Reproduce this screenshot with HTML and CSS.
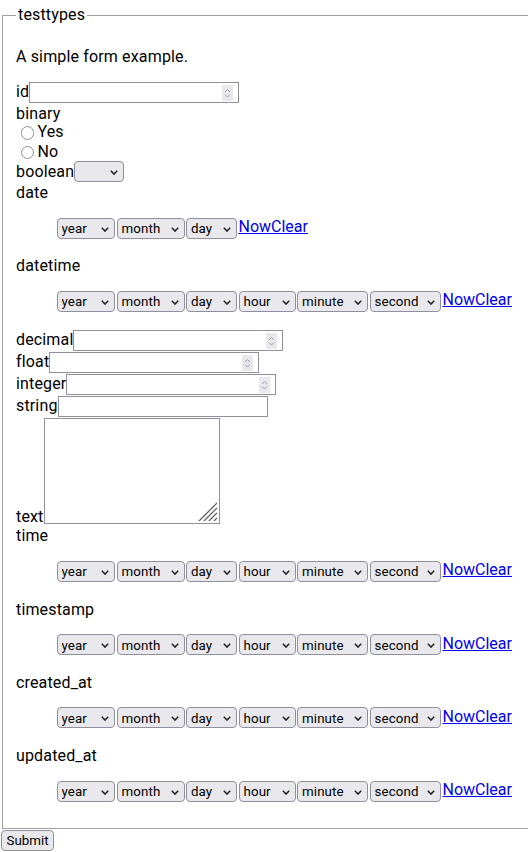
FILE: index.html
```html
<!DOCTYPE html>
<html lang="en">
<head>
<meta charset="utf-8">
<title>testtypes</title>
<link rel="stylesheet" href="styles.css">
</head>
<body>
<form class="form">
<fieldset class="fs">
<legend class="lg">testtypes</legend>
<p class="intro">A simple form example.</p>

<div class="row r-in"><label for="f-id" class="lbl">id</label><span class="num"><input id="f-id" class="num-in" type="text"><svg class="spin" width="11" height="16" viewBox="0 0 11 16"><rect width="11" height="16" fill="#e9e9ed"/><polyline points="3,7 5.5,4.5 8,7" fill="none" stroke="#9a9aa6" stroke-width="1"/><polyline points="3,9.5 5.5,12 8,9.5" fill="none" stroke="#9a9aa6" stroke-width="1"/></svg></span></div>
<div class="row r-tx">binary</div>
<div class="row r-rd"><input type="radio" class="radio" name="binary" id="b-yes"><label for="b-yes" class="rlbl">Yes</label></div>
<div class="row r-rd"><input type="radio" class="radio" name="binary" id="b-no"><label for="b-no" class="rlbl">No</label></div>
<div class="row r-in"><label for="f-bool" class="lbl">boolean</label><span class="sw"><select id="f-bool" class="sel w-bool"><option></option></select><svg class="chev" width="8" height="5" viewBox="0 0 8 5"><polyline points="0.8,0.8 4,4.1 7.2,0.8" fill="none" stroke="#222" stroke-width="1.5"/></svg></span></div>

<div class="row r-tx">date</div>
<div class="dt">
<span class="sw"><select class="sel w-year"><option>year</option></select><svg class="chev" width="8" height="5" viewBox="0 0 8 5"><polyline points="0.8,0.8 4,4.1 7.2,0.8" fill="none" stroke="#222" stroke-width="1.5"/></svg></span>
<span class="sw"><select class="sel w-month"><option>month</option></select><svg class="chev" width="8" height="5" viewBox="0 0 8 5"><polyline points="0.8,0.8 4,4.1 7.2,0.8" fill="none" stroke="#222" stroke-width="1.5"/></svg></span>
<span class="sw"><select class="sel w-day"><option>day</option></select><svg class="chev" width="8" height="5" viewBox="0 0 8 5"><polyline points="0.8,0.8 4,4.1 7.2,0.8" fill="none" stroke="#222" stroke-width="1.5"/></svg></span>
<a class="lnk" href="#">Now</a><a class="lnk" href="#">Clear</a>
</div>

<div class="row r-tx">datetime</div>
<div class="dt">
<span class="sw"><select class="sel w-year"><option>year</option></select><svg class="chev" width="8" height="5" viewBox="0 0 8 5"><polyline points="0.8,0.8 4,4.1 7.2,0.8" fill="none" stroke="#222" stroke-width="1.5"/></svg></span>
<span class="sw"><select class="sel w-month"><option>month</option></select><svg class="chev" width="8" height="5" viewBox="0 0 8 5"><polyline points="0.8,0.8 4,4.1 7.2,0.8" fill="none" stroke="#222" stroke-width="1.5"/></svg></span>
<span class="sw"><select class="sel w-day"><option>day</option></select><svg class="chev" width="8" height="5" viewBox="0 0 8 5"><polyline points="0.8,0.8 4,4.1 7.2,0.8" fill="none" stroke="#222" stroke-width="1.5"/></svg></span>
<span class="sw"><select class="sel w-hour"><option>hour</option></select><svg class="chev" width="8" height="5" viewBox="0 0 8 5"><polyline points="0.8,0.8 4,4.1 7.2,0.8" fill="none" stroke="#222" stroke-width="1.5"/></svg></span>
<span class="sw"><select class="sel w-minute"><option>minute</option></select><svg class="chev" width="8" height="5" viewBox="0 0 8 5"><polyline points="0.8,0.8 4,4.1 7.2,0.8" fill="none" stroke="#222" stroke-width="1.5"/></svg></span>
<span class="sw"><select class="sel w-second"><option>second</option></select><svg class="chev" width="8" height="5" viewBox="0 0 8 5"><polyline points="0.8,0.8 4,4.1 7.2,0.8" fill="none" stroke="#222" stroke-width="1.5"/></svg></span>
<a class="lnk" href="#">Now</a><a class="lnk" href="#">Clear</a>
</div>

<div class="row r-in"><label for="f-dec" class="lbl">decimal</label><span class="num"><input id="f-dec" class="num-in" type="text"><svg class="spin" width="11" height="16" viewBox="0 0 11 16"><rect width="11" height="16" fill="#e9e9ed"/><polyline points="3,7 5.5,4.5 8,7" fill="none" stroke="#9a9aa6" stroke-width="1"/><polyline points="3,9.5 5.5,12 8,9.5" fill="none" stroke="#9a9aa6" stroke-width="1"/></svg></span></div>
<div class="row r-in"><label for="f-float" class="lbl">float</label><span class="num"><input id="f-float" class="num-in" type="text"><svg class="spin" width="11" height="16" viewBox="0 0 11 16"><rect width="11" height="16" fill="#e9e9ed"/><polyline points="3,7 5.5,4.5 8,7" fill="none" stroke="#9a9aa6" stroke-width="1"/><polyline points="3,9.5 5.5,12 8,9.5" fill="none" stroke="#9a9aa6" stroke-width="1"/></svg></span></div>
<div class="row r-in"><label for="f-int" class="lbl">integer</label><span class="num"><input id="f-int" class="num-in" type="text"><svg class="spin" width="11" height="16" viewBox="0 0 11 16"><rect width="11" height="16" fill="#e9e9ed"/><polyline points="3,7 5.5,4.5 8,7" fill="none" stroke="#9a9aa6" stroke-width="1"/><polyline points="3,9.5 5.5,12 8,9.5" fill="none" stroke="#9a9aa6" stroke-width="1"/></svg></span></div>
<div class="row r-in"><label for="f-str" class="lbl">string</label><input id="f-str" class="txt" type="text"></div>
<div class="row r-ta"><label for="f-text" class="ta-lbl">text</label><span class="ta"><textarea id="f-text" class="ta-in"></textarea><svg class="grip" width="19" height="19" viewBox="0 0 19 19"><g stroke="#5a5a5a" stroke-width="1.2"><line x1="1" y1="19" x2="19" y2="1"/><line x1="6" y1="19" x2="19" y2="6"/><line x1="11" y1="19" x2="19" y2="11"/><line x1="16" y1="19" x2="19" y2="16"/></g></svg></span></div>

<div class="row r-tx">time</div>
<div class="dt">
<span class="sw"><select class="sel w-year"><option>year</option></select><svg class="chev" width="8" height="5" viewBox="0 0 8 5"><polyline points="0.8,0.8 4,4.1 7.2,0.8" fill="none" stroke="#222" stroke-width="1.5"/></svg></span>
<span class="sw"><select class="sel w-month"><option>month</option></select><svg class="chev" width="8" height="5" viewBox="0 0 8 5"><polyline points="0.8,0.8 4,4.1 7.2,0.8" fill="none" stroke="#222" stroke-width="1.5"/></svg></span>
<span class="sw"><select class="sel w-day"><option>day</option></select><svg class="chev" width="8" height="5" viewBox="0 0 8 5"><polyline points="0.8,0.8 4,4.1 7.2,0.8" fill="none" stroke="#222" stroke-width="1.5"/></svg></span>
<span class="sw"><select class="sel w-hour"><option>hour</option></select><svg class="chev" width="8" height="5" viewBox="0 0 8 5"><polyline points="0.8,0.8 4,4.1 7.2,0.8" fill="none" stroke="#222" stroke-width="1.5"/></svg></span>
<span class="sw"><select class="sel w-minute"><option>minute</option></select><svg class="chev" width="8" height="5" viewBox="0 0 8 5"><polyline points="0.8,0.8 4,4.1 7.2,0.8" fill="none" stroke="#222" stroke-width="1.5"/></svg></span>
<span class="sw"><select class="sel w-second"><option>second</option></select><svg class="chev" width="8" height="5" viewBox="0 0 8 5"><polyline points="0.8,0.8 4,4.1 7.2,0.8" fill="none" stroke="#222" stroke-width="1.5"/></svg></span>
<a class="lnk" href="#">Now</a><a class="lnk" href="#">Clear</a>
</div>

<div class="row r-tx">timestamp</div>
<div class="dt">
<span class="sw"><select class="sel w-year"><option>year</option></select><svg class="chev" width="8" height="5" viewBox="0 0 8 5"><polyline points="0.8,0.8 4,4.1 7.2,0.8" fill="none" stroke="#222" stroke-width="1.5"/></svg></span>
<span class="sw"><select class="sel w-month"><option>month</option></select><svg class="chev" width="8" height="5" viewBox="0 0 8 5"><polyline points="0.8,0.8 4,4.1 7.2,0.8" fill="none" stroke="#222" stroke-width="1.5"/></svg></span>
<span class="sw"><select class="sel w-day"><option>day</option></select><svg class="chev" width="8" height="5" viewBox="0 0 8 5"><polyline points="0.8,0.8 4,4.1 7.2,0.8" fill="none" stroke="#222" stroke-width="1.5"/></svg></span>
<span class="sw"><select class="sel w-hour"><option>hour</option></select><svg class="chev" width="8" height="5" viewBox="0 0 8 5"><polyline points="0.8,0.8 4,4.1 7.2,0.8" fill="none" stroke="#222" stroke-width="1.5"/></svg></span>
<span class="sw"><select class="sel w-minute"><option>minute</option></select><svg class="chev" width="8" height="5" viewBox="0 0 8 5"><polyline points="0.8,0.8 4,4.1 7.2,0.8" fill="none" stroke="#222" stroke-width="1.5"/></svg></span>
<span class="sw"><select class="sel w-second"><option>second</option></select><svg class="chev" width="8" height="5" viewBox="0 0 8 5"><polyline points="0.8,0.8 4,4.1 7.2,0.8" fill="none" stroke="#222" stroke-width="1.5"/></svg></span>
<a class="lnk" href="#">Now</a><a class="lnk" href="#">Clear</a>
</div>

<div class="row r-tx">created_at</div>
<div class="dt">
<span class="sw"><select class="sel w-year"><option>year</option></select><svg class="chev" width="8" height="5" viewBox="0 0 8 5"><polyline points="0.8,0.8 4,4.1 7.2,0.8" fill="none" stroke="#222" stroke-width="1.5"/></svg></span>
<span class="sw"><select class="sel w-month"><option>month</option></select><svg class="chev" width="8" height="5" viewBox="0 0 8 5"><polyline points="0.8,0.8 4,4.1 7.2,0.8" fill="none" stroke="#222" stroke-width="1.5"/></svg></span>
<span class="sw"><select class="sel w-day"><option>day</option></select><svg class="chev" width="8" height="5" viewBox="0 0 8 5"><polyline points="0.8,0.8 4,4.1 7.2,0.8" fill="none" stroke="#222" stroke-width="1.5"/></svg></span>
<span class="sw"><select class="sel w-hour"><option>hour</option></select><svg class="chev" width="8" height="5" viewBox="0 0 8 5"><polyline points="0.8,0.8 4,4.1 7.2,0.8" fill="none" stroke="#222" stroke-width="1.5"/></svg></span>
<span class="sw"><select class="sel w-minute"><option>minute</option></select><svg class="chev" width="8" height="5" viewBox="0 0 8 5"><polyline points="0.8,0.8 4,4.1 7.2,0.8" fill="none" stroke="#222" stroke-width="1.5"/></svg></span>
<span class="sw"><select class="sel w-second"><option>second</option></select><svg class="chev" width="8" height="5" viewBox="0 0 8 5"><polyline points="0.8,0.8 4,4.1 7.2,0.8" fill="none" stroke="#222" stroke-width="1.5"/></svg></span>
<a class="lnk" href="#">Now</a><a class="lnk" href="#">Clear</a>
</div>

<div class="row r-tx">updated_at</div>
<div class="dt">
<span class="sw"><select class="sel w-year"><option>year</option></select><svg class="chev" width="8" height="5" viewBox="0 0 8 5"><polyline points="0.8,0.8 4,4.1 7.2,0.8" fill="none" stroke="#222" stroke-width="1.5"/></svg></span>
<span class="sw"><select class="sel w-month"><option>month</option></select><svg class="chev" width="8" height="5" viewBox="0 0 8 5"><polyline points="0.8,0.8 4,4.1 7.2,0.8" fill="none" stroke="#222" stroke-width="1.5"/></svg></span>
<span class="sw"><select class="sel w-day"><option>day</option></select><svg class="chev" width="8" height="5" viewBox="0 0 8 5"><polyline points="0.8,0.8 4,4.1 7.2,0.8" fill="none" stroke="#222" stroke-width="1.5"/></svg></span>
<span class="sw"><select class="sel w-hour"><option>hour</option></select><svg class="chev" width="8" height="5" viewBox="0 0 8 5"><polyline points="0.8,0.8 4,4.1 7.2,0.8" fill="none" stroke="#222" stroke-width="1.5"/></svg></span>
<span class="sw"><select class="sel w-minute"><option>minute</option></select><svg class="chev" width="8" height="5" viewBox="0 0 8 5"><polyline points="0.8,0.8 4,4.1 7.2,0.8" fill="none" stroke="#222" stroke-width="1.5"/></svg></span>
<span class="sw"><select class="sel w-second"><option>second</option></select><svg class="chev" width="8" height="5" viewBox="0 0 8 5"><polyline points="0.8,0.8 4,4.1 7.2,0.8" fill="none" stroke="#222" stroke-width="1.5"/></svg></span>
<a class="lnk" href="#">Now</a><a class="lnk" href="#">Clear</a>
</div>
</fieldset>
<button type="submit" class="submit">Submit</button>
</form>
</body>
</html>
```
FILE: styles.css
```css
html, body {
  margin: 0;
  padding: 0;
  background: #ffffff;
}
body {
  font-family: Roboto, "Liberation Sans", sans-serif;
  font-size: 16px;
  line-height: 18.4px;
  letter-spacing: 0.15px;
  color: #000000;
}
.form {
  margin: 0;
}
.fs {
  margin: 6px 0 0 2px;
  padding: 7px 12px 8px 13px;
  border: 1px solid #a0a0a0;
  border-right: none;
  min-width: 0;
}
.lg {
  padding: 0 2px;
  font-size: 16px;
  line-height: 18.4px;
}
.intro {
  margin: 16px 0;
  padding-top: 1px;
  height: 17.4px;
}
.row {
  display: flex;
  align-items: flex-start;
  white-space: nowrap;
  box-sizing: border-box;
}
.r-in { height: 22px; }
.r-tx { height: 18.4px; padding-top: 1px; }
.r-rd { height: 19.5px; align-items: center; padding-top: 1px; }
.r-ta { height: 108.7px; align-items: flex-end; }
.lbl { padding-top: 1.5px; }
.rlbl { display: block; }

.num {
  display: inline-flex;
  align-items: flex-start;
  box-sizing: border-box;
  width: 210px;
  height: 21px;
  border: 1px solid #8f8f9d;
  background: #ffffff;
}
.num-in {
  flex: 1;
  min-width: 0;
  height: 19px;
  border: none;
  padding: 0 2px;
  margin: 0;
  background: transparent;
  font: 13.333px Roboto, sans-serif;
  outline: none;
}
.spin {
  display: block;
  margin: 2px 5px 0 0;
  flex: none;
}
.txt {
  box-sizing: border-box;
  width: 210px;
  height: 21px;
  margin: 0;
  padding: 0 2px;
  border: 1px solid #8f8f9d;
  font: 13.333px Roboto, sans-serif;
  background: #ffffff;
  outline: none;
}

.radio {
  -webkit-appearance: none;
  appearance: none;
  box-sizing: border-box;
  width: 13.4px;
  height: 13.4px;
  margin: 1px 3px 0 5px;
  border: 1px solid #8f8f9d;
  border-radius: 50%;
  background: #ffffff;
  flex: none;
}

.sw {
  position: relative;
  display: inline-flex;
  flex: none;
  margin-right: 1.5px;
}
.sel {
  -webkit-appearance: none;
  appearance: none;
  box-sizing: border-box;
  height: 21px;
  margin: 0;
  padding: 1px 0 0 4px;
  border: 1px solid #8f8f9d;
  border-radius: 4px;
  background: #e9e9ed;
  color: #000000;
  font: 13.333px Roboto, sans-serif;
  letter-spacing: 0.1px;
  outline: none;
}
.chev {
  position: absolute;
  right: 6px;
  top: 9px;
  pointer-events: none;
}
.w-bool { width: 50px; }
.w-year { width: 58.5px; }
.w-month { width: 68px; }
.w-day { width: 51px; }
.w-hour { width: 57px; }
.w-minute { width: 71px; }
.w-second { width: 71.5px; }

.dt {
  display: flex;
  align-items: flex-start;
  height: 22.9px;
  margin: 16px 0 16px 40.5px;
  white-space: nowrap;
}
.lnk {
  color: #0000ee;
  text-decoration: underline;
  margin-top: 0.5px;
  letter-spacing: 0;
}

.ta {
  position: relative;
  display: inline-block;
  margin-bottom: 2.8px;
  flex: none;
}
.ta-in {
  display: block;
  box-sizing: border-box;
  width: 176.7px;
  height: 105.7px;
  margin: 0;
  padding: 2px;
  border: 1px solid #8f8f9d;
  resize: none;
  font: 13.333px "Liberation Mono", monospace;
  background: #ffffff;
  outline: none;
}
.grip {
  position: absolute;
  right: 3px;
  bottom: 3px;
  pointer-events: none;
}
.ta-lbl {
  margin-bottom: 0;
}

.submit {
  -webkit-appearance: none;
  appearance: none;
  box-sizing: border-box;
  height: 21px;
  width: 53.5px;
  margin: 1px 0 0 0.8px;
  padding: 0;
  border: 1px solid #8f8f9d;
  border-radius: 4px;
  background: #e9e9ed;
  color: #000000;
  font: 13.333px Roboto, sans-serif;
  vertical-align: top;
}
```
